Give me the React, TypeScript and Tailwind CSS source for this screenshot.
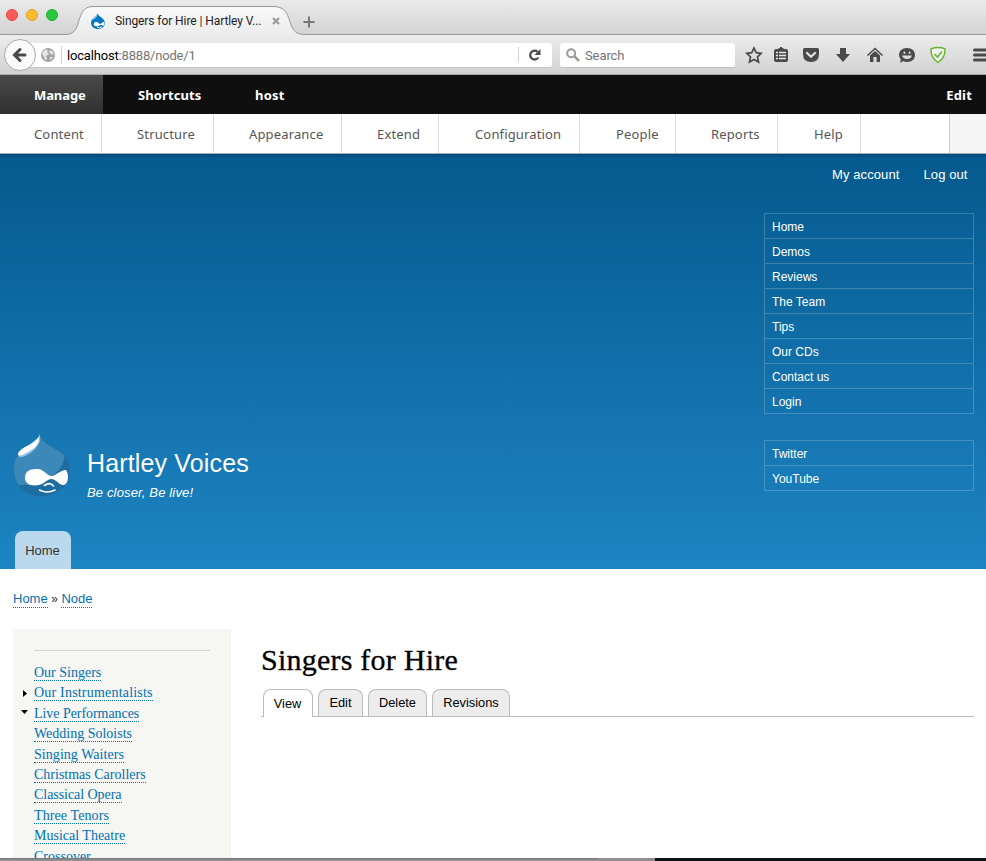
import type { ReactNode } from "react";

const adminTabs: [string, string][] = [
  ["Content", "w-[102px] pl-[34px]"],
  ["Structure", "w-[112px] pl-[35px]"],
  ["Appearance", "w-[128px] pl-[35px]"],
  ["Extend", "w-[97px] pl-[35px]"],
  ["Configuration", "w-[141px] pl-[36px]"],
  ["People", "w-[96px] pl-[36px]"],
  ["Reports", "w-[102px] pl-[35px]"],
  ["Help", "w-[83px] pl-[36px]"],
];

const singerLinks: [string, string][] = [
  ["Our Singers", ""],
  ["Our Instrumentalists", "tracking-[0.200px]"],
  ["Live Performances", "tracking-[-0.050px]"],
  ["Wedding Soloists", ""],
  ["Singing Waiters", "tracking-[0.050px]"],
  ["Christmas Carollers", ""],
  ["Classical Opera", "tracking-[-0.050px]"],
  ["Three Tenors", "tracking-[0.100px]"],
  ["Musical Theatre", ""],
  ["Crossover", ""],
];

function Icon({ children, className = "" }: { children: ReactNode; className?: string }) {
  return (
    <svg viewBox="0 0 18 18" className={`h-[18px] w-[18px] shrink-0 ${className}`} fill="#4a4a4a">
      {children}
    </svg>
  );
}

function TabStrip() {
  return (
    <div className="flex h-[35px] bg-gradient-to-b from-[#ebebeb] to-[#d2d2d2]">
      <div className="flex gap-2 pt-[9px] pl-[6px]">
        <span className="h-3 w-3 rounded-full border border-[#e2463f] bg-[#fc5b57]" />
        <span className="h-3 w-3 rounded-full border border-[#e0a02e] bg-[#fdbc2e]" />
        <span className="h-3 w-3 rounded-full border border-[#1dad2b] bg-[#28c940]" />
      </div>
      <div className="-ml-[58px] w-[65px] border-b border-[#999]" />
      <div className="relative h-[35px] w-[240px]">
        <svg viewBox="0 0 240 35" className="absolute inset-0 h-[35px] w-[240px]">
          <defs>
            <linearGradient id="tab" x1="0" y1="0" x2="0" y2="1">
              <stop offset="0" stopColor="#f9f9f9" />
              <stop offset="1" stopColor="#ececec" />
            </linearGradient>
          </defs>
          <path d="M0 35 L0 34.5 C8 34.5 11 31 13.500 22 C17 10 20 6.500 29 6.500 L208 6.500 C219 6.500 222 12 225 22 C228 31 231 34.500 240 34.500 L240 35Z" fill="url(#tab)" />
          <path d="M0 34.500 C8 34.500 11 31 13.500 22 C17 10 20 6.500 29 6.500 L208 6.500 C219 6.500 222 12 225 22 C228 31 231 34.500 240 34.500" fill="none" stroke="#999" />
        </svg>
        <div className="relative flex h-[35px] items-center pt-[7px] pl-[26px]">
          <svg viewBox="0 0 58 66" className="h-[16px] w-[14px]">
            <path d="M27 0 C29 9 34 12 42 17 C51 23 57 30 57 41 C57 56 45 66 29 66 C12 66 0 55 0 40 C0 29 7 22 15 17 C22 12 26 7 27 0Z" fill="#0678be" />
            <path d="M5 25 Q20 17 27 6 Q27 17 8 28Z" fill="#9cd4f4" />
            <path d="M20 37 C28 35 34 45 39 45 C45 43 49 36 54 38 C58 49 52 56 46 51 C39 45 31 55 22 55 C8 54 9 39 20 37Z" fill="white" />
            <path d="M25 58 Q36 65 46 57" fill="none" stroke="white" strokeWidth="4" />
          </svg>
          <span className="ml-[10px] w-[152px] font-['Roboto',sans-serif] text-[12px] leading-4 tracking-[-0.080px] whitespace-nowrap text-[#222]">Singers for Hire | Hartley V...</span>
          <svg viewBox="0 0 8 8" className="ml-[5px] h-[8px] w-[8px]">
            <path d="M1 1 L7 7 M7 1 L1 7" stroke="#999" strokeWidth="2" />
          </svg>
        </div>
      </div>
      <div className="flex-1 border-b border-[#999] pt-[16px]">
        <svg viewBox="0 0 12 12" className="-ml-[2px] h-3 w-3">
          <path d="M6 .5 V11.500 M.5 6 H11.500" stroke="#777" strokeWidth="2" />
        </svg>
      </div>
    </div>
  );
}

function NavBar() {
  return (
    <div className="flex h-[40px] items-center overflow-hidden border-b border-[#aaa] bg-gradient-to-b from-[#ececec] to-[#d2d2d2]">
      <div className="z-10 ml-[4px] flex h-[32px] w-[32px] shrink-0 items-center justify-center rounded-full border border-[#aaa] bg-[#fafafa]">
        <svg viewBox="0 0 16 16" className="-ml-[2px] h-4 w-4">
          <path d="M14 8 H4 M9 2.500 L3.500 8 L9 13.500" fill="none" stroke="#4a4a4a" strokeWidth="3" strokeLinecap="round" />
        </svg>
      </div>
      <div className="mt-px -ml-[10px] flex h-[25px] w-[526px] shrink-0 items-center rounded-[3px] border-b border-[#c6c6c6] bg-white pl-[15px]">
        <svg viewBox="0 0 14 14" className="h-[14px] w-[14px]">
          <circle cx="7" cy="7" r="7" fill="#a3a3a3" />
          <path d="M1 5 L4 1.500 L7 2 L6 4 L8 6 L5 8 L6 11 L4 12 L3 9 Z M9 2 L12 4 L12.500 7 L10 6 L8 4 Z M9 9 L12 9 L9 12.500Z" fill="#e6e6e6" />
        </svg>
        <span className="ml-[6px] h-[18px] w-px bg-[#d0d0d0]" />
        <span className="ml-[5px] flex-1 pt-[3px] font-['Roboto',sans-serif] text-[13px] tracking-[-0.180px] text-black">
          localhost<span className="text-[#757575]">:8888/node/1</span>
        </span>
        <span className="h-[15px] w-px bg-[#d0d0d0]" />
        <svg viewBox="0 0 14 14" className="mr-[10px] ml-[9px] h-[14px] w-[14px]">
          <path d="M10.300 9.500 A4.400 4.400 0 1 1 9.500 3.800" fill="none" stroke="#4a4a4a" strokeWidth="2.300" />
          <path d="M12.500 1 V7 H6.500Z" fill="#4a4a4a" />
        </svg>
      </div>
      <div className="mt-px ml-[8px] flex h-[25px] w-[175px] shrink-0 items-center rounded-[3px] border-b border-[#c0c0c0] bg-white pl-[6px]">
        <svg viewBox="0 0 14 14" className="h-[14px] w-[14px]">
          <circle cx="5.200" cy="5.200" r="4" fill="none" stroke="#999" strokeWidth="2" />
          <path d="M8.200 8.200 L13 13" stroke="#999" strokeWidth="2.500" />
        </svg>
        <span className="ml-[5px] pt-[3px] font-['Roboto',sans-serif] text-[13px] tracking-[-0.100px] text-[#757575]">Search</span>
      </div>
      <Icon className="ml-[10px]">
        <path d="M9 2 L11.200 6.700 L16.300 7.300 L12.500 10.900 L13.500 16 L9 13.500 L4.500 16 L5.500 10.900 L1.700 7.300 L6.800 6.700Z" fill="none" stroke="#4a4a4a" strokeWidth="1.700" />
      </Icon>
      <span className="ml-[4px] h-[18px] w-px bg-[#b5b5b5]" />
      <Icon className="ml-[5px]">
        <path d="M4 3 H6.500 V2 H8 V1 H10 V2 H11.500 V3 H14 Q16 3 16 5 V14 Q16 16 14 16 H4 Q2 16 2 14 V5 Q2 3 4 3Z" />
        <path d="M4 6.500 H6 M7 6.500 H14 M4 9.500 H6 M7 9.500 H14 M4 12.500 H6 M7 12.500 H14" stroke="#e5e5e5" strokeWidth="1.600" />
      </Icon>
      <Icon className="ml-[12px]">
        <path d="M2.500 2 H15.500 Q17 2 17 3.500 V8 Q17 16 9 16 Q1 16 1 8 V3.500 Q1 2 2.500 2Z" />
        <path d="M5 7 L9 10.800 L13 7" fill="none" stroke="#e3e3e3" strokeWidth="2.200" strokeLinecap="round" strokeLinejoin="round" />
      </Icon>
      <Icon className="ml-[14px]">
        <path d="M6 2 H12 V8 H16 L9 16 L2 8 H6Z" />
      </Icon>
      <Icon className="ml-[14px]">
        <path d="M1.500 9.500 L9 2.500 L16.500 9.500" fill="none" stroke="#4a4a4a" strokeWidth="1.500" />
        <path d="M9 5 L14 9.600 V16 H10.600 V11 H7.400 V16 H4 V9.600Z" />
      </Icon>
      <Icon className="ml-[14px]">
        <path d="M9 2 C14 2 17 5 17 9 C17 13 14 16 9 16 Q7 16 5 15 Q4 16.500 2 16.500 Q3 15 2.600 13 Q1 11 1 9 C1 5 4 2 9 2Z" />
        <rect x="5.500" y="5.500" width="1.800" height="2.500" rx=".9" fill="#ddd" />
        <rect x="10.700" y="5.500" width="1.800" height="2.500" rx=".9" fill="#ddd" />
        <path d="M4 9.500 H14 Q13 13 9 13 Q5 13 4 9.500Z" fill="#ddd" />
      </Icon>
      <Icon className="ml-[13px]">
        <path d="M9 1.500 Q13 1.500 16 2.800 Q16.500 12 9 16.500 Q1.500 12 2 2.800 Q5 1.500 9 1.500Z" fill="#f0f3ed" stroke="#62b52d" strokeWidth="1.400" />
        <path d="M5.500 8 L8.500 11 L13 5.500" fill="none" stroke="#62b52d" strokeWidth="1.600" />
      </Icon>
      <span className="ml-[13px] h-full w-px bg-[#c2c2c2]" />
      <svg viewBox="0 0 14 14" className="ml-[13px] h-[14px] w-[14px] shrink-0">
        <path d="M1.500 2 H14 M1.500 7 H14 M1.500 12 H14" stroke="#4a4a4a" strokeWidth="3" strokeLinecap="round" />
      </svg>
    </div>
  );
}

function AdminToolbar() {
  return (
    <div className="font-['Noto_Sans',sans-serif] text-[13px]">
      <div className="flex h-[39px] items-center bg-[#0f0f0f] font-bold text-white">
        <span className="flex h-full w-[103px] items-center bg-gradient-to-b from-[#4a4a4a] to-[#303030] pt-[2px] pl-[34px] tracking-[-0.100px]">Manage</span>
        <span className="w-[117px] pt-[2px] pl-[35px] tracking-[0.100px]">Shortcuts</span>
        <span className="flex-1 pt-[2px] pl-[35px] tracking-[0.200px]">host</span>
        <span className="pt-[2px] pr-[14px] tracking-[0.200px]">Edit</span>
      </div>
      <div className="flex h-[40px] border-b border-[#a4adb5] bg-white text-[#565656]">
        {adminTabs.map(([label, size]) => (
          <span key={label} className={`flex items-center border-r border-[#ddd] pt-[2px] tracking-[0.150px] ${size}`}>{label}</span>
        ))}
        <span className="w-[89px] border-r border-[#ccc]" />
        <span className="flex-1 bg-[#f5f5f5]" />
      </div>
    </div>
  );
}

function DropLogo() {
  return (
    <svg viewBox="0 0 58 66" className="h-[66px] w-[58px]">
      <defs>
        <clipPath id="drop">
          <path d="M27 1 C28 9 34 12 41 16 C51 21 57 28 57 38 C57 54 44 64.500 28.500 64.500 C12 64.500 .5 52 .5 37 C.5 26 7 19 15 15 C22 11 26 8 27 1Z" />
        </clipPath>
      </defs>
      <g clipPath="url(#drop)">
        <rect width="58" height="66" fill="#3c88b9" />
        <path d="M50 18 C54 28 48 39 38 44 L30 53 H0 V66 H58 V18Z" fill="#1d6da1" />
      </g>
      <path d="M27 1 C28 9 34 12 41 16 C51 21 57 28 57 38 C57 54 44 64.500 28.500 64.500 C12 64.500 .5 52 .5 37 C.5 26 7 19 15 15 C22 11 26 8 27 1Z" fill="none" stroke="#2774a5" strokeWidth=".7" />
      <path d="M5 22 C5 26 9 26 14 23 C20 20 25 15 27 9 L26 5Z" fill="#91c2e1" />
      <path d="M27 2 C25 8 20 11 14 14 C8 17 5 20 5 22 C6 25 10 23 15 20 C21 17 25 13 26 8Z" fill="white" />
      <path d="M23 37 C30 36 34 44 38.500 44 C43 44 47 38 53 38 C56 42 56 51 51 53 C47 54 43 47 38.500 47 C34 47 30 53.500 22 53.500 C15 53.500 12 50 12 46 C12 40 16 37 23 37Z" fill="white" />
      <path d="M26.500 58 Q34 62 42 58 M31.500 53.500 Q37 49.500 40.500 54" fill="none" stroke="white" strokeWidth="1.600" strokeLinecap="round" />
    </svg>
  );
}

function HeaderMenu({ items }: { items: string[] }) {
  return (
    <ul className="w-[210px] border-x border-t border-white/20 text-[12px] leading-6 text-white">
      {items.map((item) => (
        <li key={item} className="h-[25px] border-b border-white/20 pt-px pl-[7px]">{item}</li>
      ))}
    </ul>
  );
}

function Header() {
  return (
    <header className="flex h-[415px] justify-between bg-gradient-to-b from-[#055a8e] to-[#1d84c3] pr-3">
      <div className="flex flex-col justify-end pl-[13px]">
        <div className="flex h-[99px]">
          <DropLogo />
          <div className="ml-[16px] pt-[15px] text-white">
            <h1 className="text-[25px] leading-8 tracking-[0.150px]">Hartley Voices</h1>
            <p className="mt-[5px] text-[13px] leading-[18px] tracking-[0.150px] italic">Be closer, Be live!</p>
          </div>
        </div>
        <span className="ml-[2px] flex h-[38px] w-[56px] items-center justify-center rounded-t-lg bg-[#bbd9ec] pt-[2px] pr-px text-[13px] text-[#333]">Home</span>
      </div>
      <div className="flex flex-col items-end">
        <div className="flex h-[59px] w-[209px] gap-6 pt-[12px] pl-[67px] text-[13px] leading-[18px] tracking-[0.100px] whitespace-nowrap text-white">
          <span>My account</span>
          <span>Log out</span>
        </div>
        <div className="flex flex-col gap-[26px]">
          <HeaderMenu items={["Home", "Demos", "Reviews", "The Team", "Tips", "Our CDs", "Contact us", "Login"]} />
          <HeaderMenu items={["Twitter", "YouTube"]} />
        </div>
      </div>
    </header>
  );
}

function Sidebar() {
  return (
    <aside className="h-[229px] w-[218px] overflow-hidden bg-[#f6f6f2] pt-[21px] pl-[21px]">
      <div className="mb-[13px] w-[176px] border-t border-[#d6d6d6]" />
      <ul className="font-['Liberation_Serif',serif] text-[14px] text-[#0071b3]">
        {singerLinks.map(([label, tracking], i) => (
          <li key={label} className="-ml-[13px] flex h-[20.400px] items-start">
            <svg viewBox="0 0 13 17" className="h-[17px] w-[13px]">
              {i === 1 && <path d="M2 6 L6 9.500 L2 13Z" fill="black" />}
              {i === 2 && <path d="M0 5 H7 L3.500 9Z" fill="black" />}
            </svg>
            <a className={`h-[17px] border-b border-dotted border-[#0071b3] leading-[17px] ${tracking}`}>{label}</a>
          </li>
        ))}
      </ul>
    </aside>
  );
}

function Main() {
  return (
    <main className="ml-[29px] flex-1 pt-[14px]">
      <h2 className="pl-px font-['Liberation_Serif',serif] text-[30px] leading-[34px] tracking-[0.230px] text-black [-webkit-text-stroke:0.3px_black]">Singers for Hire</h2>
      <div className="mt-[12px] mr-[12px] ml-px flex h-[28px] items-end gap-[5px] border-b border-[#bbb] pl-[2px] text-[12.800px] text-black">
        <span className="-mb-px flex h-[28px] w-[50px] items-center justify-center rounded-t-lg border border-b-0 border-[#bbb] bg-white pr-px">View</span>
        <span className="flex h-[27px] w-[45px] items-center justify-center rounded-t-lg border border-b-0 border-[#bbb] bg-[#ededed]">Edit</span>
        <span className="flex h-[27px] w-[59px] items-center justify-center rounded-t-lg border border-b-0 border-[#bbb] bg-[#ededed]">Delete</span>
        <span className="flex h-[27px] w-[78px] items-center justify-center rounded-t-lg border border-b-0 border-[#bbb] bg-[#ededed]">Revisions</span>
      </div>
    </main>
  );
}

export default function App() {
  return (
    <div className="h-[861px] w-[986px] overflow-hidden bg-white font-['Liberation_Sans',Arial,sans-serif]">
      <TabStrip />
      <NavBar />
      <AdminToolbar />
      <div className="relative">
        <Header />
        <div className="absolute inset-x-0 top-0 h-[4px] bg-gradient-to-b from-black/20 to-transparent" />
      </div>
      <div className="h-[60px] pt-[22px] pl-[13px] text-[13px] leading-[16px] text-[#0071b3]">
        <a className="inline-block border-b border-dotted border-[#0071b3]">Home</a>
        <span className="mx-[3.500px] text-[12px] text-[#333]">»</span>
        <a className="inline-block border-b border-dotted border-[#0071b3]">Node</a>
      </div>
      <div className="flex h-[229px] pl-[13px]">
        <Sidebar />
        <Main />
      </div>
      <div className="flex h-[3px] bg-[#0b1314]">
        <div className="w-[598px] bg-gradient-to-b from-[#777] to-[#999]" />
        <div className="w-[57px] bg-[#928e8e]" />
      </div>
    </div>
  );
}
